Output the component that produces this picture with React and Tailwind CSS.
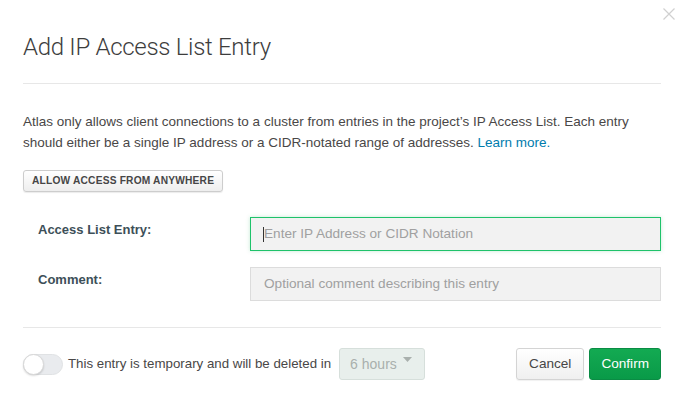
import React from "react";

export default function App() {
  return (
    <div className="relative w-[689px] h-[406px] bg-white overflow-hidden" style={{ fontFamily: '"Liberation Sans", Arial, sans-serif' }}>
      <button className="absolute right-[14px] top-[8px] text-[#d0d0d0]" aria-label="Close">
        <svg width="12" height="12" viewBox="0 0 12 12" fill="none" stroke="currentColor" strokeWidth="1.2">
          <path d="M0.5 0.5L11.5 11.5M11.5 0.5L0.5 11.5" />
        </svg>
      </button>

      <div className="pl-[23px] pr-[28px]">
        <h2 className="pt-[31px] pb-[20px] text-[24px] leading-[32px] font-light text-[#3d3d3d] tracking-[-0.3px]" style={{ fontFamily: 'Roboto, sans-serif' }}>
          Add IP Access List Entry
        </h2>
        <div className="h-px bg-[#e7e7e7]" />

        <p className="mt-[27px] text-[13.5px] leading-[21px] text-[#494747]">
          Atlas only allows client connections to a cluster from entries in the project’s IP Access List. Each entry
          <br />
          should either be a single IP address or a CIDR-notated range of addresses.{" "}
          <a href="#" className="text-[#007cad]">Learn more.</a>
        </p>

        <button className="mt-[17px] h-[22px] px-[8px] rounded-[3px] border border-[#cdcdcd] bg-gradient-to-b from-white to-[#eeeeee] text-[10.2px] font-bold text-[#464646] tracking-[0.2px] shadow-[0_1px_1px_rgba(0,0,0,0.08)]">
          ALLOW ACCESS FROM ANYWHERE
        </button>

        <div className="mt-[25px] flex flex-col gap-[16px]">
          <div className="flex items-start">
            <label className="w-[227px] pl-[15px] pt-[3px] text-[13px] font-bold text-[#3d4f58]">Access List Entry:</label>
            <div className="flex-1 h-[34px] border border-[#1ec26a] bg-[#f2f2f2] flex items-center pl-[12px] shadow-[0_0_4px_rgba(19,170,82,0.25)]">
              <span className="w-px h-[15px] bg-[#333]" />
              <span className="text-[13.6px] text-[#a0a0a0]">Enter IP Address or CIDR Notation</span>
            </div>
          </div>
          <div className="flex items-start">
            <label className="w-[227px] pl-[15px] pt-[3px] text-[13px] font-bold text-[#3d4f58]">Comment:</label>
            <div className="flex-1 h-[34px] border border-[#dcdcdc] bg-[#f2f2f2] flex items-center pl-[13px]">
              <span className="text-[13.6px] text-[#a0a0a0]">Optional comment describing this entry</span>
            </div>
          </div>
        </div>

        <div className="mt-[26px] h-px bg-[#e7e7e7]" />

        <div className="mt-[20px] flex items-center">
          <div className="w-[40px] h-[21px] rounded-full bg-[#e9ebee] border border-[#e0e2e4] relative shrink-0">
            <div className="absolute left-[-1px] top-[-1px] w-[21px] h-[21px] rounded-full bg-white border border-[#d8d8d8] shadow-[0_1px_2px_rgba(0,0,0,0.15)]" />
          </div>
          <span className="ml-[5px] text-[13.3px] text-[#494747]">This entry is temporary and will be deleted in</span>
          <div className="ml-[8px] w-[86px] h-[32px] rounded-[3px] border border-[#d6dfdb] bg-[#e8efec] flex items-center pl-[10px] relative">
            <span className="text-[14px] text-[#a9b0ad]">6 hours</span>
            <svg className="absolute right-[12px] top-[8px]" width="9" height="5" viewBox="0 0 9 5">
              <path d="M0 0H9L4.5 5Z" fill="#a9b0ad" />
            </svg>
          </div>
          <div className="flex-1" />
          <button className="h-[32px] px-[12px] rounded-[3px] border border-[#d4d4d4] bg-gradient-to-b from-white to-[#f0f0f0] text-[13.6px] text-[#464646] shadow-[0_1px_1px_rgba(0,0,0,0.06)]">
            Cancel
          </button>
          <button className="ml-[5px] h-[32px] px-[11px] rounded-[3px] border border-[#0a8c44] bg-gradient-to-b from-[#13aa52] to-[#099a48] text-[13.6px] text-white">
            Confirm
          </button>
        </div>
      </div>
    </div>
  );
}
